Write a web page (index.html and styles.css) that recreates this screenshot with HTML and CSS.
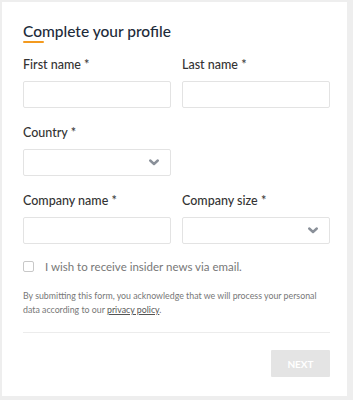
FILE: index.html
```html
<!DOCTYPE html>
<html lang="en">
<head>
    <meta charset="UTF-8">
    <meta name="viewport" content="width=device-width, initial-scale=1.0">
    <title>Complete your profile</title>
    <link rel="stylesheet" href="styles.css">
</head>
<body>
    <div class="card">
        <h1 class="title">Complete your profile</h1>

        <form class="profile-form">
            <div class="row">
                <div class="field">
                    <label>First name *</label>
                    <input type="text" class="box">
                </div>
                <div class="field">
                    <label>Last name *</label>
                    <input type="text" class="box">
                </div>
            </div>

            <div class="row">
                <div class="field">
                    <label>Country *</label>
                    <div class="box select">
                        <svg class="chevron" width="10" height="7" viewBox="0 0 10 7"><path d="M1.2 1.5 L5 5 L8.8 1.5" fill="none" stroke="#8a9099" stroke-width="2.4" stroke-linecap="round" stroke-linejoin="round"/></svg>
                    </div>
                </div>
            </div>

            <div class="row">
                <div class="field">
                    <label>Company name *</label>
                    <input type="text" class="box">
                </div>
                <div class="field">
                    <label>Company size *</label>
                    <div class="box select">
                        <svg class="chevron" width="10" height="7" viewBox="0 0 10 7"><path d="M1.2 1.5 L5 5 L8.8 1.5" fill="none" stroke="#8a9099" stroke-width="2.4" stroke-linecap="round" stroke-linejoin="round"/></svg>
                    </div>
                </div>
            </div>

            <label class="check">
                <span class="checkbox"></span>
                <span>I wish to receive insider news via email.</span>
            </label>

            <p class="notice">By submitting this form, you acknowledge that we will process your personal data according to our <a href="#">privacy policy</a>.</p>

            <div class="footer">
                <button type="button" class="next" disabled>NEXT</button>
            </div>
        </form>
    </div>
</body>
</html>
```

FILE: styles.css
```css
html, body {
    margin: 0;
    padding: 0;
}
body {
    font-family: 'Lato', 'Noto Sans', sans-serif;
    background-color: #eeeeee;
    padding: 2px 6px 4px 2px;
    height: 394px;
}
.card {
    background-color: white;
    height: 100%;
    box-sizing: border-box;
    padding: 21px 17px 0 21px;
}
.title {
    margin: 0;
    font-size: 15.5px;
    font-weight: 500;
    color: #1d2b3a;
    line-height: 16px;
}
.title::after {
    content: '';
    display: block;
    width: 21px;
    height: 2px;
    background-color: #f39a1f;
    margin-top: 2px;
    border-radius: 1px;
}
.profile-form {
    margin-top: 14px;
}
.row {
    display: grid;
    grid-template-columns: 1fr 1fr;
    gap: 11px;
    margin-bottom: 17px;
}
.field {
    display: flex;
    flex-direction: column;
    min-width: 0;
}
.field label {
    font-size: 12.5px;
    font-weight: 500;
    color: #333;
    line-height: 16px;
    margin-bottom: 8px;
}
.box {
    width: 100%;
    height: 27px;
    box-sizing: border-box;
    border: 1px solid #e3e3e3;
    border-radius: 2px;
    background: white;
    padding: 0 8px;
    margin: 0;
    font: inherit;
}
.select {
    display: flex;
    align-items: center;
    justify-content: flex-end;
    padding-right: 11px;
}
.check {
    display: flex;
    align-items: center;
    gap: 11px;
    height: 11px;
    font-size: 11.5px;
    color: #777;
}
.checkbox {
    width: 11px;
    height: 11px;
    border: 1px solid #c8c8c8;
    border-radius: 2px;
    box-sizing: border-box;
    flex-shrink: 0;
}
.notice {
    font-size: 8.8px;
    line-height: 14px;
    color: #777;
    margin: 17px 0 0;
}
.notice a {
    color: #555;
    text-decoration: underline;
}
.footer {
    margin-top: 15px;
    border-top: 1px solid #ececec;
    padding-top: 17px;
    display: flex;
    justify-content: flex-end;
}
.next {
    width: 59px;
    height: 27px;
    border: none;
    border-radius: 1px;
    background-color: #e4e4e4;
    color: white;
    font-family: inherit;
    font-size: 10px;
    font-weight: 700;
    padding: 0;
}
```
